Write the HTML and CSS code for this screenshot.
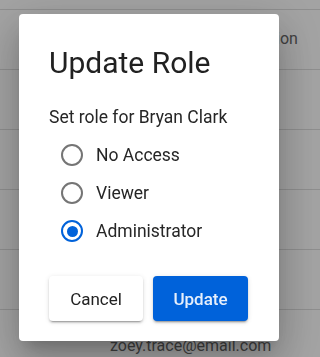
FILE: index.html
```html
<!DOCTYPE html>
<html lang="en">
<head>
<meta charset="utf-8">
<title>Update Role</title>
<link rel="stylesheet" href="styles.css">
</head>
<body>
<div class="page">
  <div class="row row-head-top"></div>
  <div class="row row-head"><span class="head-cell">Action</span></div>
  <div class="row"></div>
  <div class="row"></div>
  <div class="row"></div>
  <div class="row"></div>
  <div class="row row-last"><span class="email">zoey.trace@email.com</span></div>
</div>
<div class="backdrop"></div>
<div class="dialog" role="dialog" aria-labelledby="dlg-title">
  <h2 class="dialog-title" id="dlg-title">Update Role</h2>
  <p class="dialog-text">Set role for Bryan Clark</p>
  <div class="radio-group" role="radiogroup">
    <label class="radio-row"><span class="radio"></span><span class="radio-label">No Access</span></label>
    <label class="radio-row"><span class="radio"></span><span class="radio-label">Viewer</span></label>
    <label class="radio-row"><span class="radio radio-checked"><span class="radio-dot"></span></span><span class="radio-label">Administrator</span></label>
  </div>
  <div class="actions">
    <button class="btn btn-cancel" type="button">Cancel</button>
    <button class="btn btn-primary" type="button">Update</button>
  </div>
</div>
</body>
</html>
```
FILE: styles.css
```css
* { box-sizing: border-box; }
html, body {
  margin: 0;
  padding: 0;
  height: 357px;
  overflow: hidden;
  background: #ffffff;
  font-family: Roboto, "Noto Sans", "Liberation Sans", sans-serif;
}
.page {
  display: flex;
  flex-direction: column;
}
.row {
  height: 60px;
  flex: none;
  border-bottom: 1px solid #dedede;
  color: #666666;
  font-size: 16px;
  line-height: 24px;
  white-space: nowrap;
  overflow: hidden;
}
.row-head-top {
  height: 10px;
}
.row-head {
  padding: 17px 0 0 252px;
}
.row-last {
  padding: 24px 0 0 110px;
}
.backdrop {
  position: fixed;
  inset: 0;
  background: rgba(0, 0, 0, 0.36);
}
.dialog {
  position: fixed;
  left: 19px;
  top: 14px;
  width: 260px;
  height: 327px;
  background: #ffffff;
  border-radius: 4px;
  padding: 31px 30px 20px 30px;
  display: flex;
  flex-direction: column;
  box-shadow: 0 11px 15px -7px rgba(0,0,0,0.2), 0 24px 38px 3px rgba(0,0,0,0.14), 0 9px 46px 8px rgba(0,0,0,0.12);
}
.dialog-title {
  margin: 0;
  font-size: 30px;
  line-height: 36px;
  font-weight: 400;
  color: #212121;
  white-space: nowrap;
}
.dialog-text {
  margin: 24px 0 0 0;
  font-size: 17.5px;
  line-height: 24px;
  color: #262626;
  white-space: nowrap;
}
.radio-group {
  margin: 7px 0 0 12px;
  display: flex;
  flex-direction: column;
}
.radio-row {
  height: 38px;
  display: flex;
  align-items: center;
  gap: 13px;
}
.radio {
  width: 22px;
  height: 22px;
  flex: none;
  border: 2px solid #757575;
  border-radius: 50%;
  display: flex;
  align-items: center;
  justify-content: center;
}
.radio-checked {
  border-color: #0062da;
}
.radio-dot {
  width: 11px;
  height: 11px;
  border-radius: 50%;
  background: #0062da;
}
.radio-label {
  font-size: 17.5px;
  line-height: 24px;
  color: #262626;
  white-space: nowrap;
}
.actions {
  margin-top: auto;
  display: flex;
  gap: 10px;
}
.btn {
  height: 45px;
  border: none;
  border-radius: 4px;
  font-family: Roboto, "Noto Sans", "Liberation Sans", sans-serif;
  font-size: 17px;
  padding: 0;
  cursor: pointer;
}
.btn-cancel {
  width: 94px;
  background: #ffffff;
  color: #222222;
  font-weight: 400;
  box-shadow: 0 3px 1px -2px rgba(0,0,0,0.2), 0 2px 2px 0 rgba(0,0,0,0.14), 0 1px 5px 0 rgba(0,0,0,0.12);
}
.btn-primary {
  width: 95px;
  background: #0062da;
  color: rgba(255, 255, 255, 0.9);
  font-weight: 500;
  box-shadow: 0 3px 1px -2px rgba(0,0,0,0.2), 0 2px 2px 0 rgba(0,0,0,0.14), 0 1px 5px 0 rgba(0,0,0,0.12);
}
```
